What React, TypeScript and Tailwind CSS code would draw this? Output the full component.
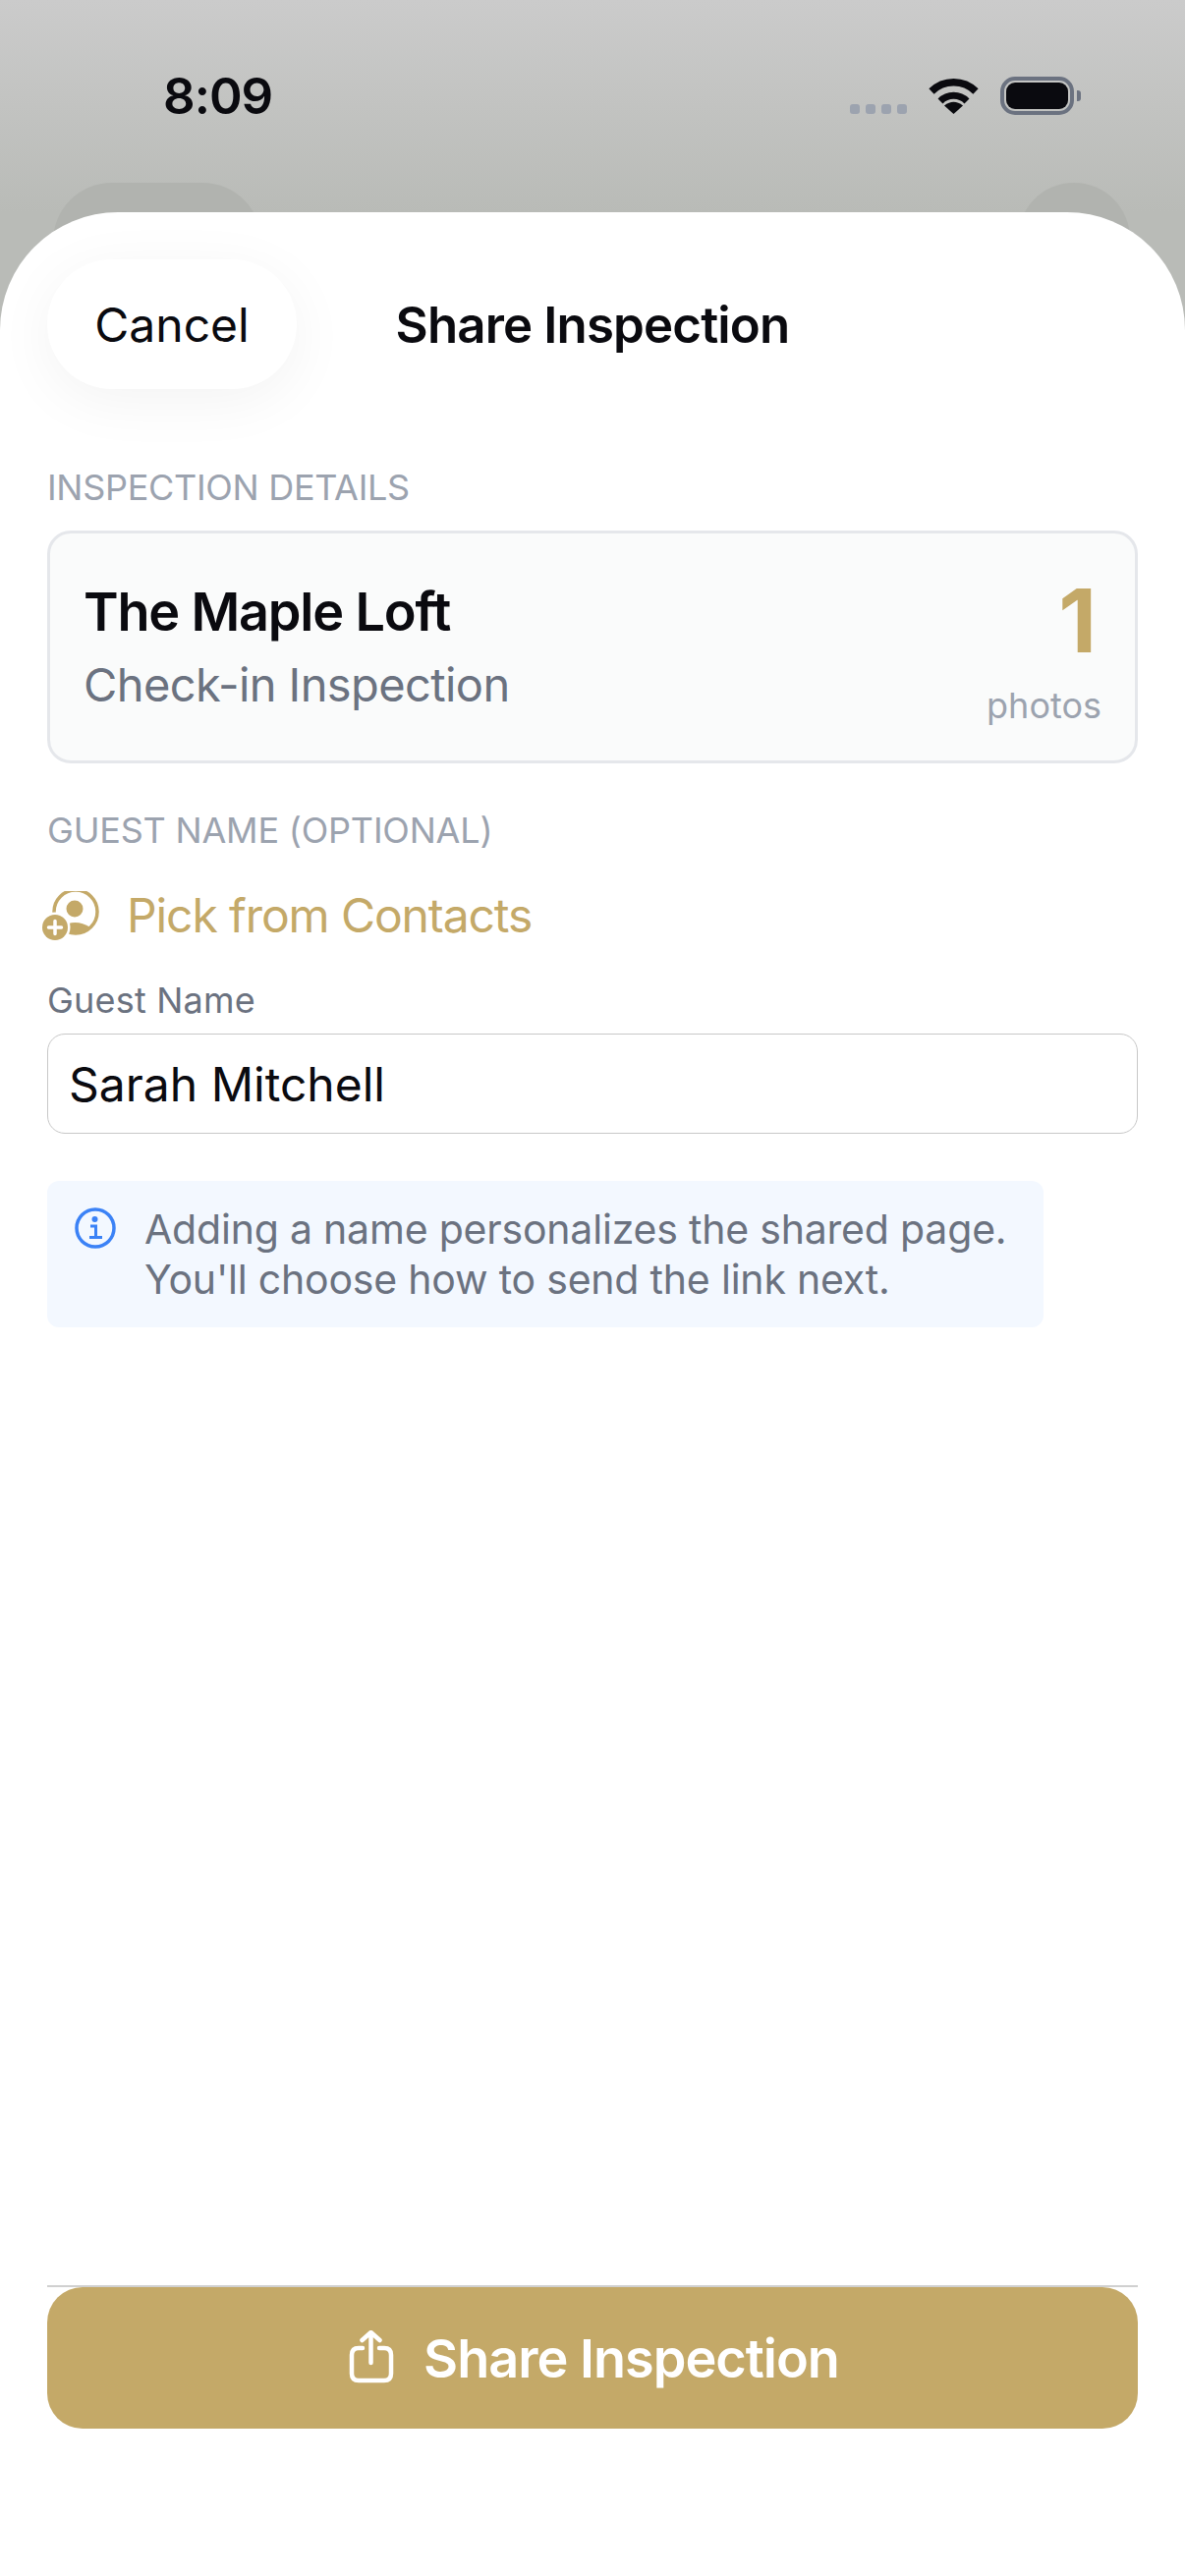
const gold = '#c4a968';

function WifiIcon() {
  return (
    <svg width="51" height="37" viewBox="0 0 51 37" fill="none">
      <path d="M3 14 A 32 32 0 0 1 48 14" stroke="#0a0a0f" strokeWidth="7.5" />
      <path d="M12 24 A 19 19 0 0 1 39 24" stroke="#0a0a0f" strokeWidth="7" />
      <path d="M25.5 37 L16 28.5 Q25.5 21 35 28.5 Z" fill="#0a0a0f" />
    </svg>
  );
}

function BatteryIcon() {
  return (
    <div className="flex items-center gap-[3px]">
      <div className="w-[75px] h-[39px] rounded-[15px] border-[4px] border-[#6b7280] p-[2px]">
        <div className="w-full h-full rounded-[9px] bg-[#0a0a0f]" />
      </div>
      <div className="w-[4px] h-[11px] rounded-r-[3px] bg-[#6b7280]" />
    </div>
  );
}

function ContactPlusIcon() {
  return (
    <svg width="60" height="50" viewBox="0 0 60 50" className="shrink-0">
      <circle cx="36" cy="21" r="22" fill="none" stroke={gold} strokeWidth="3.5" />
      <circle cx="35" cy="18" r="8.5" fill={gold} />
      <path d="M21 37 Q35 27 51 37 A22 22 0 0 1 21 37 Z" fill={gold} />
      <circle cx="15" cy="37" r="15.5" fill="#ffffff" />
      <circle cx="15" cy="37" r="13" fill={gold} />
      <path d="M15 30.5 V43.5 M8.5 37 H21.5" stroke="#ffffff" strokeWidth="3.5" strokeLinecap="round" />
    </svg>
  );
}

function InfoIcon() {
  return (
    <svg width="42" height="42" viewBox="0 0 42 42" fill="none" className="shrink-0">
      <circle cx="21" cy="21" r="19" stroke="#3b82f6" strokeWidth="3.5" />
      <circle cx="20.5" cy="12" r="3" fill="#3b82f6" />
      <path d="M16 19 H21.5 V30 M15 30.5 H28" stroke="#3b82f6" strokeWidth="3" />
    </svg>
  );
}

function ShareIcon() {
  return (
    <svg width="46" height="56" viewBox="0 0 46 56" fill="none" className="shrink-0">
      <path
        d="M14 18 H10 Q3 18 3 25 V44 Q3 51 10 51 H36 Q43 51 43 44 V25 Q43 18 36 18 H31"
        stroke="#ffffff"
        strokeWidth="4.5"
        strokeLinecap="round"
      />
      <path d="M22.5 33 V3 M13.5 10 L22.5 2 L31.5 10" stroke="#ffffff" strokeWidth="4.5" strokeLinecap="round" strokeLinejoin="round" />
    </svg>
  );
}

export default function App() {
  return (
    <div
      className="relative w-[1206px] h-[2622px] overflow-hidden flex flex-col bg-[linear-gradient(180deg,#cbcbcb_0px,#b9bbb7_216px)]"
      style={{ fontFamily: 'Inter, "Liberation Sans", sans-serif' }}
    >
      {/* Buttons of the screen behind the sheet */}
      <div className="absolute left-[54px] top-[186px] w-[212px] h-[132px] rounded-[60px] bg-[#b1b3af]" />
      <div className="absolute left-[1036px] top-[186px] w-[114px] h-[132px] rounded-[57px] bg-[#b1b3af]" />

      {/* Status bar */}
      <div className="relative h-[216px] shrink-0 flex items-start justify-between pl-[166px] pr-[106px] pt-[68px]">
        <span className="text-[51px] leading-[60px] font-semibold tracking-[-1px] text-[#0a0a0f]">8:09</span>
        <div className="flex items-center pt-[10px]">
          <div className="flex gap-[6px] self-end mb-[1px] mr-[22px]">
            <div className="w-[10px] h-[10px] rounded-[3px] bg-[#9ca3af]" />
            <div className="w-[10px] h-[10px] rounded-[3px] bg-[#9ca3af]" />
            <div className="w-[10px] h-[10px] rounded-[3px] bg-[#9ca3af]" />
            <div className="w-[10px] h-[10px] rounded-[3px] bg-[#9ca3af]" />
          </div>
          <WifiIcon />
          <div className="ml-[22px]">
            <BatteryIcon />
          </div>
        </div>
      </div>

      {/* Sheet */}
      <div className="relative flex-1 flex flex-col bg-white rounded-t-[120px] px-[48px]">
        {/* Header */}
        <div className="grid grid-cols-[1fr_auto_1fr] items-center pt-[48px]">
          <button className="justify-self-start w-[254px] h-[132px] pt-[2px] rounded-[66px] bg-white shadow-[0_12px_60px_rgba(0,0,0,0.05)] text-[48px] text-[#0a0a0f]">
            Cancel
          </button>
          <h1 className="pt-[2px] text-[51px] font-semibold tracking-[-0.85px] text-[#0a0a0f]">Share Inspection</h1>
          <div />
        </div>

        {/* Inspection details */}
        <div className="mt-[78px] text-[36px] leading-[44px] tracking-[-0.3px] text-[#9ca3af]">INSPECTION DETAILS</div>
        <div className="mt-[22px] h-[237px] rounded-[24px] border-[3px] border-[#e5e7eb] bg-[#fafbfb] px-[34px] flex items-center justify-between">
          <div className="flex flex-col">
            <span className="text-[54px] leading-[66px] font-semibold tracking-[-1.2px] text-[#0a0a0f]">The Maple Loft</span>
            <span className="mt-[11px] text-[47px] leading-[60px] tracking-[-0.6px] text-[#6b7280]">Check-in Inspection</span>
          </div>
          <div className="flex flex-col items-end">
            <span className="text-[90px] leading-[100px] font-bold text-[#c4a968] pr-[5px]">1</span>
            <span className="mt-[14px] -mb-[4px] text-[36px] leading-[44px] text-[#9ca3af]">photos</span>
          </div>
        </div>

        {/* Guest name */}
        <div className="mt-[46px] text-[36px] leading-[44px] tracking-[-0.2px] text-[#9ca3af]">GUEST NAME (OPTIONAL)</div>
        <div className="mt-[35px] -ml-[7px] flex items-center gap-[28px]">
          <ContactPlusIcon />
          <span className="text-[48px] leading-[60px] tracking-[-1.1px] text-[#c4a968]">Pick from Contacts</span>
        </div>

        <div className="mt-[34px] text-[36px] leading-[44px] tracking-[0.2px] text-[#6b7280]">Guest Name</div>
        <div className="mt-[12px] h-[102px] pt-[2px] rounded-[18px] border border-[#c8c8c8] bg-white flex items-center px-[21px] text-[48px] text-[#0a0a0f]">
          Sarah Mitchell
        </div>

        <div className="mt-[48px] w-[1014px] h-[149px] rounded-[12px] bg-[#f3f8ff] flex gap-[29px] pl-[28px] pt-[24px]">
          <div className="pt-[3px]">
            <InfoIcon />
          </div>
          <p className="text-[41px] leading-[51px] tracking-[-0.2px] text-[#6b7280]">
            Adding a name personalizes the shared page.
            <br />
            You'll choose how to send the link next.
          </p>
        </div>

        {/* Footer */}
        <div className="mt-auto border-t-2 border-[#d0d0d0] pb-[150px]">
          <button className="w-full h-[144px] pl-[3px] rounded-[36px] bg-[#c4a968] flex items-center justify-center gap-[30px] text-[54px] font-semibold tracking-[-1px] text-white">
            <ShareIcon />
            Share Inspection
          </button>
        </div>
      </div>
    </div>
  );
}
